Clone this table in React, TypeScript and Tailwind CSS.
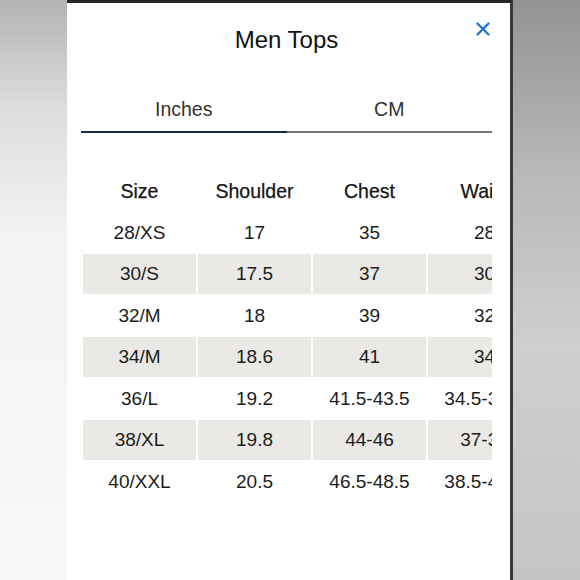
const headers = ['Size', 'Shoulder', 'Chest', 'Waist'];

const rows: string[][] = [
  ['28/XS', '17', '35', '28'],
  ['30/S', '17.5', '37', '30'],
  ['32/M', '18', '39', '32'],
  ['34/M', '18.6', '41', '34'],
  ['36/L', '19.2', '41.5-43.5', '34.5-36.5'],
  ['38/XL', '19.8', '44-46', '37-39'],
  ['40/XXL', '20.5', '46.5-48.5', '38.5-40.5'],
];

export default function App() {
  return (
    <div className="flex h-[580px] w-[580px] overflow-hidden font-['Liberation_Sans',Arial,sans-serif] text-[#1c1c1c]">
      <div className="w-[67px] shrink-0 bg-[linear-gradient(to_bottom,#b3b3b3_0%,#dcdcdc_18%,#f2f2f2_40%,#f8f8f8_100%)]" />

      <div className="relative w-[446px] shrink-0 border-t-[3px] border-r-[3px] border-t-[#262626] border-r-[#3a3a3a] bg-white pl-[14px] pr-[18px]">
        <button className="absolute right-[16px] top-[15px] p-1 text-[#1b6fd6]">
          <svg width="14" height="14" viewBox="0 0 14 14" fill="none" stroke="currentColor" strokeWidth="2.2" strokeLinecap="round">
            <path d="M1.5 1.5l11 11M12.5 1.5l-11 11" />
          </svg>
        </button>

        <div className="pt-[23px] text-center text-[24px] leading-[28px] text-[#111]">Men Tops</div>

        <div className="mt-[34px] flex">
          <button className="flex h-[45px] flex-1 items-center justify-center border-b-2 border-[#1d2a48] pt-[1px] text-[19.5px] text-[#333]">
            Inches
          </button>
          <button className="flex h-[45px] flex-1 items-center justify-center border-b-2 border-[#76767a] pt-[1px] text-[19.5px] text-[#333]">
            CM
          </button>
        </div>

        <div className="mt-[38px] overflow-hidden pl-[2px]">
          <div className="grid w-max grid-cols-[113px_113px_113px_113px] gap-x-[2px] gap-y-[2px] text-[19px]">
            {headers.map((h) => (
              <div key={h} className="flex h-[39.5px] items-center justify-center whitespace-nowrap pt-[1px] text-[19.5px] text-[#151515] [-webkit-text-stroke:0.25px_#151515]">
                {h}
              </div>
            ))}
            {rows.map((row, i) =>
              row.map((cell, j) => (
                <div
                  key={`${i}-${j}`}
                  className={`flex h-[39.5px] items-center justify-center whitespace-nowrap pt-[1px] ${i % 2 === 1 ? 'bg-[#eae9e5]' : ''}`}
                >
                  {cell}
                </div>
              ))
            )}
          </div>
        </div>
      </div>

      <div className="flex-1 bg-[linear-gradient(to_bottom,#939393_0%,#b8b8b8_30%,#cfcfcf_60%,#c4c4c4_100%)]" />
    </div>
  );
}
